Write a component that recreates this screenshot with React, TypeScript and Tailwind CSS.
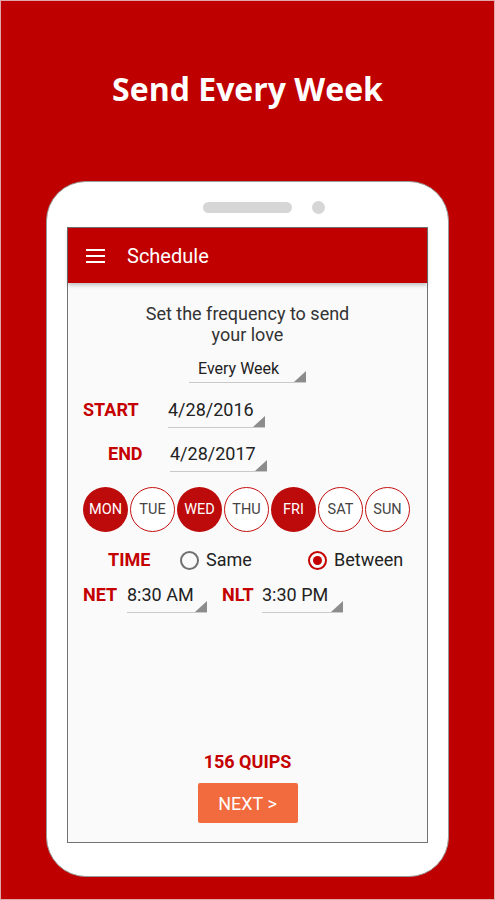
const days = [
  { label: 'MON', on: true },
  { label: 'TUE', on: false },
  { label: 'WED', on: true },
  { label: 'THU', on: false },
  { label: 'FRI', on: true },
  { label: 'SAT', on: false },
  { label: 'SUN', on: false },
];

// little grey corner marker used by the spinner fields
function Corner() {
  return (
    <svg className="absolute right-0 bottom-0" width="12" height="11" viewBox="0 0 12 11">
      <polygon points="12,0 12,11 0,11" fill="#8c8c8c" />
    </svg>
  );
}

function Field({ value, width }: { value: string; width: string }) {
  return (
    <div className={`relative ${width} border-b border-[#c9c9c9] pb-[6px] text-[18px] leading-[22px] text-[#222]`}>
      {value}
      <Corner />
    </div>
  );
}

export default function App() {
  return (
    <div
      className="w-[495px] h-[900px] border border-[#e0a8a8] bg-[#bf0000] flex flex-col items-center"
      style={{ fontFamily: 'Roboto, "Liberation Sans", sans-serif' }}
    >
      <h1
        className="mt-[69px] text-[32px] leading-[38px] font-bold text-white"
        style={{ fontFamily: '"Open Sans", "Liberation Sans", sans-serif' }}
      >
        Send Every Week
      </h1>

      {/* Phone */}
      <div className="mt-[73px] w-[403px] h-[696px] rounded-[40px] border border-[#9a9a9a] bg-white flex flex-col items-center">
        <div className="pt-[19px] pl-[33px] flex items-center gap-[20px]">
          <div className="w-[89px] h-[11px] rounded-full bg-[#d6d6d6]" />
          <div className="w-[13px] h-[13px] rounded-full bg-[#d6d6d6]" />
        </div>

        {/* Screen */}
        <div className="mt-[13px] w-[361px] h-[616px] border border-[#727272] bg-[#fafafa] flex flex-col">
          <div className="relative z-10 h-[55px] shrink-0 bg-[#c00000] flex items-center pl-[18px] shadow-[0_2px_4px_rgba(0,0,0,0.25)]">
            <svg width="19" height="16" viewBox="0 0 19 16">
              <rect x="0" y="1" width="19" height="2" fill="#fff" />
              <rect x="0" y="7" width="19" height="2" fill="#fff" />
              <rect x="0" y="13" width="19" height="2" fill="#fff" />
            </svg>
            <span className="ml-[22px] text-[20px] leading-[24px] text-white">Schedule</span>
          </div>

          <div className="flex-1 flex flex-col pt-[20px] pb-[19px]">
            <p className="text-center text-[18px] leading-[21px] text-[#333]">
              Set the frequency to send
              <br />
              your love
            </p>

            <div className="self-center relative w-[117px] mt-[14px] border-b border-[#c9c9c9] pb-[3px] pl-[9px] text-[16px] leading-[20px] text-[#222]">
              Every Week
              <Corner />
            </div>

            <div className="mt-[16px] ml-[15px] flex items-start">
              <span className="w-[85px] text-[18px] leading-[22px] font-bold text-[#c40000]">START</span>
              <Field value="4/28/2016" width="w-[97px]" />
            </div>

            <div className="mt-[15px] ml-[40px] flex items-start">
              <span className="w-[62px] text-[18px] leading-[22px] font-bold text-[#c40000]">END</span>
              <Field value="4/28/2017" width="w-[97px]" />
            </div>

            <div className="mt-[15px] ml-[15px] flex gap-[2px]">
              {days.map((d) =>
                d.on ? (
                  <div
                    key={d.label}
                    className="w-[45px] h-[45px] rounded-full bg-[#bd0a0a] flex items-center justify-center text-[14.5px] text-white"
                  >
                    {d.label}
                  </div>
                ) : (
                  <div
                    key={d.label}
                    className="w-[45px] h-[45px] rounded-full border-[1.5px] border-[#c41010] bg-white flex items-center justify-center text-[14.5px] text-[#444]"
                  >
                    {d.label}
                  </div>
                )
              )}
            </div>

            <div className="mt-[17px] ml-[40px] flex items-center">
              <span className="w-[72px] text-[18px] leading-[22px] font-bold text-[#c40000]">TIME</span>
              <div className="w-[128px] flex items-center gap-[7px]">
                <div className="w-[19px] h-[19px] rounded-full border-2 border-[#707070]" />
                <span className="text-[18px] leading-[22px] text-[#222]">Same</span>
              </div>
              <div className="flex items-center gap-[7px]">
                <div className="w-[19px] h-[19px] rounded-full border-2 border-[#c40000] flex items-center justify-center">
                  <div className="w-[9px] h-[9px] rounded-full bg-[#c40000]" />
                </div>
                <span className="text-[18px] leading-[22px] text-[#222]">Between</span>
              </div>
            </div>

            <div className="mt-[13px] ml-[15px] flex items-start">
              <span className="w-[44px] text-[18px] leading-[22px] font-bold text-[#c40000]">NET</span>
              <Field value="8:30 AM" width="w-[80px]" />
              <span className="ml-[15px] w-[40px] text-[18px] leading-[22px] font-bold text-[#c40000]">NLT</span>
              <Field value="3:30 PM" width="w-[81px]" />
            </div>

            <div className="mt-auto flex flex-col items-center">
              <span className="text-[18px] leading-[22px] font-bold text-[#c40000]">156 QUIPS</span>
              <button className="mt-[10px] w-[100px] h-[40px] rounded-[2px] bg-[#f26b3f] text-[18px] text-white">
                NEXT &gt;
              </button>
            </div>
          </div>
        </div>
      </div>
    </div>
  );
}
